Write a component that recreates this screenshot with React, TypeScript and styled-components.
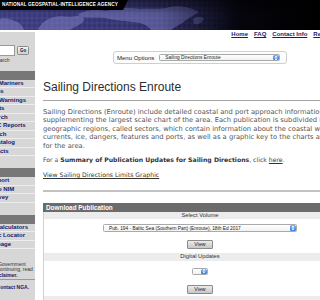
import React from 'react';
import styled, {createGlobalStyle} from 'styled-components';

const sideSections = [
  [
    'Notices to Mariners',
    'Publications',
    'Broadcast Warnings',
    'Safety Alerts',
    'Lights Search',
    'Online DNC Reports',
    'Radio Search',
    'Nautical Catalog',
    'DNC Products',
  ],
  ['Submit Report', 'Welcome to NIM', 'Online Survey'],
  ['Geodetic Calculators', 'Geographic Locator', 'MSI Homepage'],
];

const topLinks = ['Home', 'FAQ', 'Contact Info', 'Resources'];

function Chip() {
  return (
    <ChipBox>
      <svg width="4" height="6" viewBox="0 0 4 6">
        <path d="M2 0.4 L3.6 2.4 H0.4 Z M2 5.6 L3.6 3.6 H0.4 Z" fill="#fff" />
      </svg>
    </ChipBox>
  );
}

function BannerArt() {
  const cols = Array.from({length: 52}, (_, i) => i * 5 + 2);
  const rows = [3, 8, 13, 18, 23, 28];

  return (
    <ArtSvg viewBox="0 0 320 30" preserveAspectRatio="none">
      <defs>
        <linearGradient id="sky" x1="0" x2="1" y1="0" y2="0">
          <stop offset="0" stopColor="#3b3b80" />
          <stop offset="0.42" stopColor="#323270" />
          <stop offset="0.6" stopColor="#1a1a3c" />
          <stop offset="0.75" stopColor="#05050c" />
          <stop offset="1" stopColor="#000" />
        </linearGradient>
        <linearGradient id="shade" x1="0" x2="0" y1="0" y2="1">
          <stop offset="0" stopColor="#000" stopOpacity="0.45" />
          <stop offset="0.5" stopColor="#000" stopOpacity="0" />
        </linearGradient>
        <linearGradient id="fade" x1="0" x2="1" y1="0" y2="0">
          <stop offset="0" stopColor="#fff" stopOpacity="1" />
          <stop offset="0.5" stopColor="#fff" stopOpacity="0.85" />
          <stop offset="0.74" stopColor="#fff" stopOpacity="0" />
        </linearGradient>
        <mask id="fadeMask">
          <rect width="320" height="30" fill="url(#fade)" />
        </mask>
      </defs>
      <rect width="320" height="30" fill="url(#sky)" />
      <g mask="url(#fadeMask)">
        <g fill="#6a6aac" opacity="0.8">
          <path d="M0 19 C6 17 13 20 19 23 C22 25 23 28 24 30 L0 30 Z" />
          <path d="M38 30 C40 24 46 19 54 17 C62 15 69 18 76 16 C82 15 86 18 83 22 C79 26 73 27 70 30 Z" />
          <path d="M78 14 C86 10 96 9 106 11 C116 8 128 7 140 9 C150 8 160 10 170 7 C180 5 192 8 199 12 C195 15 190 17 186 20 C182 24 176 26 171 30 L151 30 C148 25 140 22 132 22 C124 20 114 21 106 18 C98 17 88 18 80 17 Z" />
          <path d="M193 19 C197 16 202 16 204 19 C202 23 198 25 194 24 Z" />
          <path d="M176 13 C180 12 184 14 185 18 C183 20 180 20 178 18 Z" />
        </g>
        <g stroke="#9a9ad0" strokeWidth="0.5" opacity="0.35">
          {cols.map((x) => (
            <line key={`c${x}`} x1={x} y1="0" x2={x} y2="30" />
          ))}
          {rows.map((y) => (
            <line key={`r${y}`} x1="0" y1={y} x2="320" y2={y} />
          ))}
        </g>
      </g>
      <rect width="320" height="30" fill="url(#shade)" />
    </ArtSvg>
  );
}

export default function App() {
  return (
    <>
      <GlobalStyle />
      <Banner>
        <BannerArt />
        <AgencyStrip>NATIONAL GEOSPATIAL-INTELLIGENCE AGENCY</AgencyStrip>
      </Banner>

      <Layout>
        <Sidebar>
          <SearchRow>
            <SearchInput />
            <GoButton>Go</GoButton>
          </SearchRow>
          <SearchHint>Advanced Search</SearchHint>

          {sideSections.map((links, i) => (
            <React.Fragment key={i}>
              <SectionBar />
              {links.map((link) => (
                <SideLink key={link} href="#">
                  {link}
                </SideLink>
              ))}
              <SideSpacer />
            </React.Fragment>
          ))}

          <Notice>
            Official U.S. Government
            <br />
            site. Before continuing, read
            <br />
            the <b>NGA Disclaimer.</b>
          </Notice>
          <NoticeLink href="#">Feedback: Contact NGA.</NoticeLink>
        </Sidebar>

        <Main>
          <TopNav>
            {topLinks.map((link) => (
              <NavLink key={link} href="#">
                {link}
              </NavLink>
            ))}
          </TopNav>

          <MenuBox>
            <MenuLabel>Menu Options</MenuLabel>
            <FakeSelect $width={123} $height={7}>
              <SelectText>Sailing Directions Enroute</SelectText>
              <Chip />
            </FakeSelect>
          </MenuBox>

          <Title>Sailing Directions Enroute</Title>

          <Intro>
            Sailing Directions (Enroute) include detailed coastal and port approach information
            <br />
            supplementing the largest scale chart of the area. Each publication is subdivided into
            <br />
            geographic regions, called sectors, which contain information about the coastal weather,
            <br />
            currents, ice, dangers, features and ports, as well as a graphic key to the charts available
            <br />
            for the area.
          </Intro>

          <Summary>
            For a <b>Summary of Publication Updates for Sailing Directions</b>, click{' '}
            <InlineLink href="#">here</InlineLink>.
          </Summary>

          <GraphicLink href="#">View Sailing Directions Limits Graphic</GraphicLink>

          <Divider />

          <Panel>
            <PanelHead>Download Publication</PanelHead>
            <FieldLabel>Select Volume</FieldLabel>
            <FieldBody $top={5} $gap={8} $bottom={4}>
              <FakeSelect $width={194} $height={8}>
                <SelectText>
                  Pub. 194 - Baltic Sea (Southern Part) (Enroute), 18th Ed 2017
                </SelectText>
                <Chip />
              </FakeSelect>
              <ViewButton>View</ViewButton>
            </FieldBody>
            <FieldLabel>Digital Updates</FieldLabel>
            <FieldBody $top={7} $gap={10} $bottom={2}>
              <FakeSelect $width={16} $height={7}>
                <SelectText />
                <Chip />
              </FakeSelect>
              <ViewButton>View</ViewButton>
            </FieldBody>
            <FieldLabel />
          </Panel>
        </Main>
      </Layout>
    </>
  );
}

const GlobalStyle = createGlobalStyle`
  html, body {
    margin: 0;
    padding: 0;
    background: #fff;
  }

  body {
    width: 320px;
    height: 300px;
    overflow: hidden;
    font-family: "Liberation Sans", Arial, sans-serif;
    color: #333;
  }
`;

const Banner = styled.header`
  position: relative;
  height: 30px;
  overflow: hidden;
  display: flex;
  flex-direction: column;
`;

const ArtSvg = styled.svg`
  position: absolute;
  inset: 0;
  width: 100%;
  height: 100%;
`;

const AgencyStrip = styled.div`
  position: relative;
  width: 128px;
  height: 10px;
  padding-left: 2px;
  box-sizing: border-box;
  background: #000;
  clip-path: polygon(0 0, 100% 0, calc(100% - 5px) 100%, 0 100%);
  color: #fff;
  font-size: 4.7px;
  font-weight: bold;
  letter-spacing: 0.1px;
  line-height: 10px;
  white-space: nowrap;
`;

const Layout = styled.div`
  display: flex;
  gap: 8px;
  margin: 2px 0 0 -40px;
`;

const Sidebar = styled.nav`
  flex: 0 0 75px;
  display: flex;
  flex-direction: column;
  background: #d7d7d7;
  padding-top: 13px;
  padding-bottom: 20px;
`;

const SearchRow = styled.div`
  display: flex;
  align-items: center;
  gap: 2px;
  padding-left: 8px;
`;

const SearchInput = styled.div`
  width: 47px;
  height: 11px;
  box-sizing: border-box;
  background: #fff;
  border: 1px solid #9a9a9a;
`;

const GoButton = styled.button`
  width: 12px;
  height: 9px;
  padding: 0;
  border: 1px solid #8c8c8c;
  border-radius: 1.5px;
  background: linear-gradient(#f4f4f4, #cfcfcf);
  color: #111;
  font-family: "Liberation Sans", Arial, sans-serif;
  font-size: 4.5px;
  font-weight: bold;
  line-height: 7px;
`;

const SearchHint = styled.div`
  margin: 2px 0 7.5px 10px;
  font-size: 5px;
  line-height: 5px;
  color: #333;
  white-space: nowrap;
`;

const SectionBar = styled.div`
  height: 9px;
  background: #777;
`;

const SideLink = styled.a`
  display: block;
  height: 8.5px;
  box-sizing: border-box;
  padding-left: 8px;
  border-bottom: 1px solid #ececec;
  color: #17176c;
  font-size: 6px;
  font-weight: bold;
  line-height: 7.5px;
  text-decoration: none;
  white-space: nowrap;
`;

const SideSpacer = styled.div`
  height: 12px;
`;

const Notice = styled.div`
  margin: 1px 0 0 10.5px;
  padding-bottom: 1.5px;
  font-size: 5px;
  line-height: 5.3px;
  color: #333;
  white-space: nowrap;

  b {
    color: #17176c;
  }
`;

const NoticeLink = styled.a`
  display: block;
  padding: 5px 0 0 10.5px;
  border-top: 1px solid #9a9a9a;
  color: #17176c;
  font-size: 5px;
  font-weight: bold;
  line-height: 5px;
  text-decoration: none;
  white-space: nowrap;
`;

const Main = styled.main`
  flex: 0 0 314px;
  display: flex;
  flex-direction: column;
`;

const TopNav = styled.div`
  display: flex;
  justify-content: flex-end;
  gap: 6px;
  height: 5px;
  padding-right: 13px;
`;

const NavLink = styled.a`
  color: #1b1b6e;
  font-size: 6px;
  font-weight: bold;
  line-height: 5px;
  white-space: nowrap;
`;

const MenuBox = styled.div`
  display: flex;
  align-items: center;
  gap: 5px;
  align-self: center;
  width: 174px;
  height: 13px;
  box-sizing: border-box;
  margin-top: 14px;
  padding: 0 6px 0 3px;
  border: 1px solid #cfcfcf;
  border-radius: 3px;
  background: #fcfcfc;
`;

const MenuLabel = styled.span`
  font-size: 6px;
  color: #222;
  white-space: nowrap;
`;

const FakeSelect = styled.div<{$width: number; $height: number}>`
  display: flex;
  align-items: stretch;
  width: ${(p) => p.$width}px;
  height: ${(p) => p.$height}px;
  box-sizing: border-box;
  border: 0.5px solid #a9a9a9;
  border-radius: 1.5px;
  background: linear-gradient(#ffffff, #f1f1f1);
  overflow: hidden;
`;

const SelectText = styled.span`
  flex: 1;
  padding-left: 5px;
  font-size: 4.8px;
  color: #222;
  white-space: nowrap;
  display: flex;
  align-items: center;
`;

const ChipBox = styled.span`
  flex: 0 0 6px;
  display: flex;
  align-items: center;
  justify-content: center;
  background: linear-gradient(#74b6fb, #2a79e0);
  border-radius: 1.5px;
`;

const Title = styled.h1`
  margin: 16px 0 0;
  padding-bottom: 6px;
  border-bottom: 1px solid #a5a5a5;
  font-size: 12px;
  font-weight: normal;
  line-height: 14px;
  color: #2d2d2d;
  white-space: nowrap;
`;

const Intro = styled.p`
  margin: 6.5px 0 0;
  font-family: "DejaVu Sans", Verdana, sans-serif;
  font-size: 6.75px;
  line-height: 8.5px;
  color: #555;
  white-space: nowrap;
`;

const Summary = styled.p`
  margin: 6px 0 0;
  font-family: "DejaVu Sans", Verdana, sans-serif;
  font-size: 6.15px;
  line-height: 8.5px;
  color: #444;
  white-space: nowrap;

  b {
    color: #333;
  }
`;

const InlineLink = styled.a`
  color: #333;
`;

const GraphicLink = styled.a`
  margin-top: 6.5px;
  font-family: "DejaVu Sans", Verdana, sans-serif;
  font-size: 6.15px;
  line-height: 8.5px;
  color: #333;
  white-space: nowrap;
`;

const Divider = styled.hr`
  width: 100%;
  margin: 10px 0 0;
  border: 0;
  border-top: 2px solid #c2c2c2;
`;

const Panel = styled.section`
  margin-top: 11px;
  border: 1px solid #d0d0d0;
  border-top: 0;
`;

const PanelHead = styled.div`
  height: 9px;
  margin: 0 -1px;
  padding-left: 3px;
  background: #6b6b6b;
  color: #fff;
  font-size: 6.4px;
  font-weight: bold;
  line-height: 9px;
  white-space: nowrap;
`;

const FieldLabel = styled.div`
  height: 7.5px;
  background: #ececec;
  color: #333;
  font-size: 5.8px;
  line-height: 7.5px;
  text-align: center;
`;

const FieldBody = styled.div<{$top: number; $gap: number; $bottom: number}>`
  display: flex;
  flex-direction: column;
  align-items: center;
  gap: ${(p) => p.$gap}px;
  padding: ${(p) => p.$top}px 0 ${(p) => p.$bottom}px;
`;

const ViewButton = styled.button`
  width: 26px;
  height: 9px;
  padding: 0;
  border: 1px solid #8a8a8a;
  border-radius: 1px;
  background: linear-gradient(#ececec, #c6c6c6);
  color: #222;
  font-family: "Liberation Sans", Arial, sans-serif;
  font-size: 5.3px;
  line-height: 7px;
`;
